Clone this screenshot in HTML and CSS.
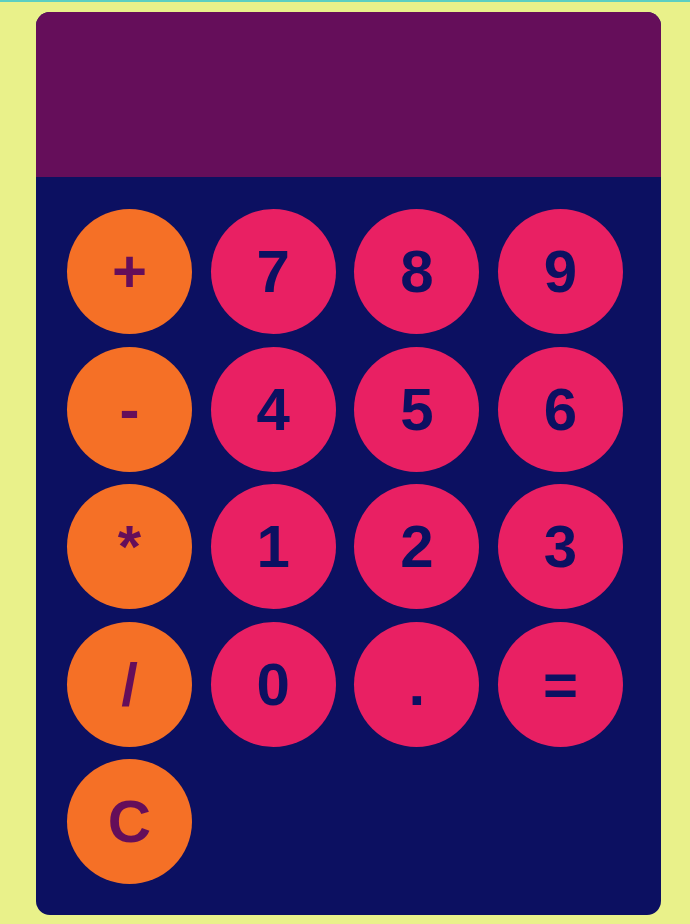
FILE: index.html
```html
<!DOCTYPE html>
<html>
<head>
<meta charset="utf-8">
<link rel="stylesheet" href="styles.css">
</head>
<body>
<div class="calc">
  <div class="display"></div>
  <div class="keys">
    <div class="row">
      <button class="key op">+</button>
      <button class="key num">7</button>
      <button class="key num">8</button>
      <button class="key num">9</button>
    </div>
    <div class="row">
      <button class="key op">-</button>
      <button class="key num">4</button>
      <button class="key num">5</button>
      <button class="key num">6</button>
    </div>
    <div class="row">
      <button class="key op">*</button>
      <button class="key num">1</button>
      <button class="key num">2</button>
      <button class="key num">3</button>
    </div>
    <div class="row">
      <button class="key op">/</button>
      <button class="key num">0</button>
      <button class="key num">.</button>
      <button class="key num">=</button>
    </div>
    <div class="row">
      <button class="key op">C</button>
    </div>
  </div>
</div>
</body>
</html>
```

FILE: styles.css
```css
html {
  border-top: 2px solid #5ccfc2;
  background: #e9f18a;
}
body {
  margin: 0;
  padding: 10px 29px 9px 36px;
  background: #e9f18a;
  font-family: "Liberation Sans", Arial, sans-serif;
}
.calc {
  width: 625px;
  border-radius: 14px;
  overflow: hidden;
  background: #0c1061;
}
.display {
  height: 165px;
  background: #650e5a;
}
.keys {
  padding: 32px 38px 31px 31px;
  display: flex;
  flex-direction: column;
  gap: 12.5px;
}
.row {
  display: flex;
  gap: 18.67px;
}
.key {
  width: 125px;
  height: 125px;
  border: none;
  border-radius: 50%;
  padding: 0;
  margin: 0;
  font-family: "Liberation Sans", Arial, sans-serif;
  font-weight: bold;
  font-size: 60px;
  display: flex;
  align-items: center;
  justify-content: center;
}
.op {
  background: #f57026;
  color: #650e5a;
}
.num {
  background: #e92063;
  color: #0c1061;
}
```
